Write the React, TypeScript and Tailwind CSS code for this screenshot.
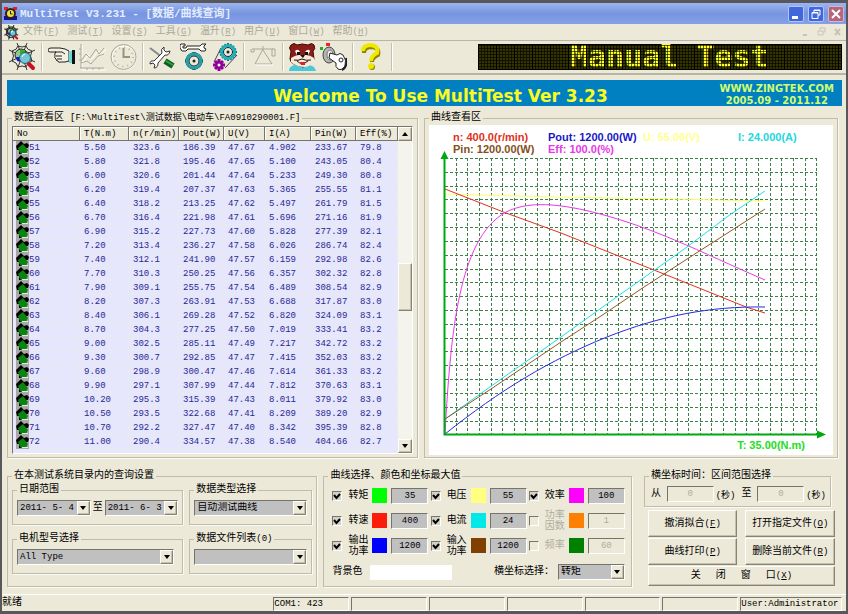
import type { ReactNode } from "react";
import clsx from "clsx";

const columns = [
  { name: "No", width: "w-[67px]" },
  { name: "T(N.m)", width: "w-[49px]" },
  { name: "n(r/min)", width: "w-[50px]" },
  { name: "Pout(W)", width: "w-[45px]" },
  { name: "U(V)", width: "w-[41px]" },
  { name: "I(A)", width: "w-[46px]" },
  { name: "Pin(W)", width: "w-[45px]" },
  { name: "Eff(%)", width: "w-[42px]" },
];

const rows = [
  ["51", "5.50", "323.6", "186.39", "47.67", "4.902", "233.67", "79.8"],
  ["52", "5.80", "321.8", "195.46", "47.65", "5.100", "243.05", "80.4"],
  ["53", "6.00", "320.6", "201.44", "47.64", "5.233", "249.30", "80.8"],
  ["54", "6.20", "319.4", "207.37", "47.63", "5.365", "255.55", "81.1"],
  ["55", "6.40", "318.2", "213.25", "47.62", "5.497", "261.79", "81.5"],
  ["56", "6.70", "316.4", "221.98", "47.61", "5.696", "271.16", "81.9"],
  ["57", "6.90", "315.2", "227.73", "47.60", "5.828", "277.39", "82.1"],
  ["58", "7.20", "313.4", "236.27", "47.58", "6.026", "286.74", "82.4"],
  ["59", "7.40", "312.1", "241.90", "47.57", "6.159", "292.98", "82.6"],
  ["60", "7.70", "310.3", "250.25", "47.56", "6.357", "302.32", "82.8"],
  ["61", "7.90", "309.1", "255.75", "47.54", "6.489", "308.54", "82.9"],
  ["62", "8.20", "307.3", "263.91", "47.53", "6.688", "317.87", "83.0"],
  ["63", "8.40", "306.1", "269.28", "47.52", "6.820", "324.09", "83.1"],
  ["64", "8.70", "304.3", "277.25", "47.50", "7.019", "333.41", "83.2"],
  ["65", "9.00", "302.5", "285.11", "47.49", "7.217", "342.72", "83.2"],
  ["66", "9.30", "300.7", "292.85", "47.47", "7.415", "352.03", "83.2"],
  ["67", "9.60", "298.9", "300.47", "47.46", "7.614", "361.33", "83.2"],
  ["68", "9.90", "297.1", "307.99", "47.44", "7.812", "370.63", "83.1"],
  ["69", "10.20", "295.3", "315.39", "47.43", "8.011", "379.92", "83.0"],
  ["70", "10.50", "293.5", "322.68", "47.41", "8.209", "389.20", "82.9"],
  ["71", "10.70", "292.2", "327.47", "47.40", "8.342", "395.39", "82.8"],
  ["72", "11.00", "290.4", "334.57", "47.38", "8.540", "404.66", "82.7"],
];

const menus = [
  ["文件", "F"],
  ["测试", "T"],
  ["设置", "S"],
  ["工具", "G"],
  ["温升", "R"],
  ["用户", "U"],
  ["窗口", "W"],
  ["帮助", "H"],
];

const curves = [
  { color: "#ffff60", d: "M445 194 558 197 674 199 765 201" },
  {
    color: "#e03020",
    d: "M445 189 506 213 561 233 611 253 664 274 704 290 746 307 765 313",
  },
  {
    color: "#e838e8",
    d: "M445 434C448 378 452 330 460 294 468 258 481 226 506 212 526 202 552 203 584 210 650 225 700 252 765 280",
  },
  {
    color: "#20e0e0",
    d: "M445 419 504 377 561 337 604 306 642 279 687 247 731 214 765 191",
  },
  {
    color: "#905828",
    d: "M445 419 491 389 561 342 604 314 641 289 664 274 701 250 765 209",
  },
  {
    color: "#2828e0",
    d: "M445 434C500 390 550 360 607 337 660 316 710 306 765 307",
  },
];

const curveOptions = [
  { name: "转矩", color: "bg-[#00ff00]", value: "35", on: true },
  { name: "电压", color: "bg-[#ffff80]", value: "55", on: true },
  { name: "效率", color: "bg-[#ff00ff]", value: "100", on: true },
  { name: "转速", color: "bg-[#fc1c0c]", value: "400", on: true },
  { name: "电流", color: "bg-[#00e8e8]", value: "24", on: true },
  { name: "功率因数", color: "bg-[#ff8000]", value: "1", on: false },
  { name: "输出功率", color: "bg-[#0000ff]", value: "1200", on: true },
  { name: "输入功率", color: "bg-[#804000]", value: "1200", on: true },
  { name: "频率", color: "bg-[#008000]", value: "60", on: false },
];

const sunken =
  "border border-t-[#77756a] border-l-[#77756a] border-r-white border-b-white";
const raised =
  "border border-t-white border-l-white border-r-[#858374] border-b-[#858374] shadow-[inset_-1px_-1px_0_#c4c1ae]";

const HotKey = ({ k }: { k: string }) => (
  <span className="text-[9px]">
    (<u>{k}</u>)
  </span>
);

const Group = ({
  title,
  className,
  children,
}: {
  title: ReactNode;
  className?: string;
  children: ReactNode;
}) => (
  <fieldset
    className={clsx(
      "min-w-0 border border-[#bfbcab] shadow-[1px_1px_0_#fbfaf3]",
      className,
    )}
  >
    <legend className="ml-1 whitespace-nowrap px-0.5 leading-3">{title}</legend>
    {children}
  </fieldset>
);

const DropDown = ({
  label,
  value,
  className,
  mono,
}: {
  label: string;
  value: string;
  className?: string;
  mono?: boolean;
}) => (
  <div className={clsx("relative h-4 bg-[#c0c0c0]", sunken, className)}>
    <select
      aria-label={label}
      className={clsx(
        "block h-full w-full appearance-none pl-0.5 leading-3 outline-none",
        mono && "text-[9px]",
      )}
    >
      <option>{value}</option>
    </select>
    <span
      className={clsx(
        "pointer-events-none absolute inset-y-0 right-0 flex w-[13px] items-center justify-center bg-[#ece9d8]",
        raised,
      )}
    >
      <svg width="6" height="4" viewBox="0 0 6 4">
        <path d="M0 0h6L3 4z" />
      </svg>
    </span>
  </div>
);

const Separator = () => (
  <span className="mx-[3px] h-7 w-0.5 border-l border-[#c4c1b0] bg-white" />
);

const ToolButton = ({ label, children }: { label: string; children: ReactNode }) => (
  <button type="button" aria-label={label} className="mx-0.5">
    <svg width="27" height="28" viewBox="0 0 27 28" fill="none">
      {children}
    </svg>
  </button>
);

const WebDrawing = () => (
  <>
    <path
      d="M13 13 8 0M13 13 18 0M13 13 26 7M13 13 26 19M13 13 18 27M13 13 8 27M13 13 0 19M13 13 0 7M9 3q4 2 8 0M17 3q1 4 6 5M23 8q-3 5 0 10M23 18q-5 1-6 6M9 24q4-2 8 0M9 24q-1-5-6-6M3 18q3-5 0-10M3 8q5-1 6-5M10 7q3 2 6 0 1 2 4 3-2 3 0 6"
      stroke="#333"
    />
    <circle cx="12" cy="12" r="6" fill="#90c890" stroke="#222" />
    <path d="M7 14h6v5l-5-1z" fill="#1818c8" />
    <path d="M11 7h5v4h-5z" fill="#38b020" />
    <circle cx="16" cy="15" r="5.500" fill="#70c8d8" stroke="#28606c" />
    <path d="M13 14q1-3 3-3" stroke="#fff" />
    <path d="m20 21 4 4" stroke="#c81028" strokeWidth="4" strokeLinecap="round" />
  </>
);

const gearTeeth = "M0-9V9M-9 0H9M-6-6 6 6M6-6-6 6M-3-8 3 8M3-8-3 8M-8-3 8 3M-8 3 8-3";

const ToolBar = () => (
  <div className="flex items-center">
    <span className="w-[5px]" />
    <ToolButton label="查询">
      <WebDrawing />
    </ToolButton>
    <Separator />
    <ToolButton label="手动测试">
      <path
        d="M0 7q0-2 3-2h9l5 1 4 2v10l-4 1h-4q-3 1-3-1-2 0-2-2-2-1-1-3-1-2 1-4H2Q0 9 0 7Z"
        fill="#f4f0e0"
        stroke="#222"
      />
      <path d="M7 9h7l3 2M8 13h6M9 16h5" stroke="#222" />
      <path d="M21 8h3v12h-3z" fill="#68d8d8" />
      <path d="M24 7h3v14h-3z" fill="#111" />
    </ToolButton>
    <ToolButton label="曲线">
      <g stroke="#fff" transform="translate(1 1)">
        <path d="M2 1v25h24M3 18l5-7 4 4 6-8 3 4 5-6" />
      </g>
      <path
        d="M2 1v24M1 25h24M2 18l5-7 4 4 6-9 3 5 5-6M2 20l6-2 4 3 7-8 6-2M0 6h2M0 11h2M0 17h2M8 25v2M14 25v2M20 25v2"
        stroke="#aaa899"
      />
    </ToolButton>
    <ToolButton label="时钟">
      <circle cx="14" cy="15" r="12" stroke="#fff" />
      <circle cx="13.500" cy="14" r="12.500" stroke="#a9a798" />
      <circle cx="13.500" cy="14" r="9.500" stroke="#b6b4a5" strokeDasharray="1 4" strokeWidth="2" />
      <path d="M13.500 5v9H20" stroke="#959384" strokeWidth="2" />
    </ToolButton>
    <Separator />
    <ToolButton label="工具">
      <path d="m1 5 8 6 3 3" stroke="#888" strokeWidth="2" />
      <path d="m16 18 8 5" stroke="#145c22" strokeWidth="6" />
      <path d="m17 18 7 4" stroke="#18b038" strokeWidth="2" />
      <path
        d="M15 4q-4 2-2 6L5 18q-4-1-4 3l3-1 2 2-1 3q4 0 4-5l7-8q4 1 5-4l-4 1-2-2z"
        fill="#fff"
        stroke="#333"
      />
    </ToolButton>
    <ToolButton label="设置">
      <g transform="translate(14 18)">
        <path d={gearTeeth} stroke="#104c50" strokeWidth="3" />
        <circle r="7" fill="#ece9d8" stroke="#20a0a8" strokeWidth="3" />
        <circle r="5" stroke="#123" />
        <circle r="1.500" fill="#222" />
      </g>
      <path
        d="M1 1h4v2H3v2h3l1-2h13l2-2h4l-2 2v2l2 1-1 2h-4l-2-2H8L6 8H2L0 5V2z"
        fill="#fff"
        stroke="#222"
      />
    </ToolButton>
    <ToolButton label="传动">
      <path d="M10 5 3 19M26 12 14 25" stroke="#444" />
      <g transform="translate(17 9)">
        <path d={gearTeeth} stroke="#107078" strokeWidth="2" />
        <circle r="6.500" fill="#ece9d8" stroke="#20b0b8" strokeWidth="3" />
        <circle r="4.500" stroke="#123" />
        <circle r="1.500" fill="#222" />
      </g>
      <g transform="translate(8 22)">
        <path d="M0-6V6M-6 0H6M-4-4 4 4M4-4-4 4" stroke="#900098" strokeWidth="3" />
        <circle r="1.500" fill="#fff" />
      </g>
    </ToolButton>
    <Separator />
    <ToolButton label="校准">
      <path d="M2 6h21M13 6 5 21h17L13 7M1 6v3h3V6M22 6v7h3V6ZM13 3v3" stroke="#aaa899" />
      <path d="M5 22h18" stroke="#fff" />
    </ToolButton>
    <Separator />
    <ToolButton label="用户">
      <path d="M0 28q0-5 6-6h14q6 1 7 6z" fill="#48c8d8" />
      <path
        d="M2 2q3-3 6 0 5-2 11 0 4-3 6 0 2 4-1 6l1 8q-1 4-6 6l-5 2-6-2q-6-1-7-6l1-8Q-1 5 2 2Z"
        fill="#8c1c18"
        stroke="#310"
      />
      <path d="M2 15q5-3 8-3h7q4 0 8 3v4q-5 5-9 5-9 0-14-5z" fill="#f8e8d8" />
      <path d="M6 8q3-3 5 1l-1 3H8zM16 9q3-4 5-1l-2 4h-2z" fill="#fff" />
      <path d="M8 9h3v3H8zM16 9h3v3h-3zM11 12h5l-2 3z" fill="#111" />
      <path d="M5 17q4 1 8-1 4 2 9 1M8 18q5 5 11 0" stroke="#211" />
      <path d="M11 19h5v3h-4z" fill="#d02828" />
    </ToolButton>
    <ToolButton label="密钥">
      <path d="M6 0h4v3H6z" fill="#e82818" />
      <path d="M0 4h3v3H0z" fill="#20b020" />
      <ellipse cx="9" cy="12" rx="6" ry="8" fill="#b4b4b0" stroke="#444" />
      <ellipse cx="10" cy="12" rx="3" ry="5" fill="#eee" stroke="#777" />
      <path
        d="m10 10 7 2q3-3 6 0 4 5 2 11-3 5-7 3-3-2-2-6l-7-5z"
        fill="#fff"
        stroke="#222"
      />
      <path d="M26 15q2 9-4 12" stroke="#222" strokeWidth="2" />
      <circle cx="21" cy="17" r="2" stroke="#222" />
    </ToolButton>
    <Separator />
    <ToolButton label="帮助">
      <path
        d="M4 9q0-6 8-6 8 1 6 8-6 3-6 7"
        stroke="#8c8600"
        strokeWidth="4"
        transform="translate(1 1)"
      />
      <path d="M4 8q0-6 8-6 8 1 6 8-6 3-6 8" stroke="#f0e800" strokeWidth="4" />
      <circle cx="13" cy="24" r="3" fill="#8c8600" />
      <circle cx="12" cy="23" r="3" fill="#f0e800" />
    </ToolButton>
    <Separator />
  </div>
);

const LedPanel = () => (
  <div className="relative flex h-[26px] w-[364px] items-center border border-black bg-[#343400] pl-[91px]">
    <p className="whitespace-pre font-['DejaVu_Sans_Mono',monospace] text-[30px] leading-[26px] font-bold text-[#ffff20]">
      Manual Test
    </p>
    {/* dark mesh between the lamps, stronger after every fifth one */}
    <div className="absolute inset-0 bg-[repeating-linear-gradient(90deg,transparent_0_17px,#000_17px_18px),repeating-linear-gradient(90deg,transparent_0_2px,#00000099_2px_3px),repeating-linear-gradient(0deg,transparent_0_2px,#00000099_2px_3px)]" />
  </div>
);

const TitleBar = () => (
  <header className="flex h-[21px] items-center bg-linear-to-b from-[#9db4ee] via-[#7795e0] to-[#84a0e8] pr-0.5">
    <svg width="15" height="15" viewBox="0 0 15 15" className="ml-px">
      <path d="M1 1h4v3H1zM10 1h4v3h-4z" fill="#e02020" />
      <path d="M1 10h13v4H1z" fill="#1010a0" />
      <circle cx="7.500" cy="7.500" r="5.500" fill="#302020" />
      <circle cx="7.500" cy="7.500" r="3.500" fill="#f0e040" />
      <path d="M7.500 5v3h2" stroke="#222" fill="none" />
    </svg>
    <h1 className="ml-0.5 flex-1 whitespace-nowrap text-[11px] font-bold text-[#e4ecff]">
      MultiTest V3.231 - [数据/曲线查询]
    </h1>
    <div className="flex gap-1">
      <button
        type="button"
        aria-label="最小化"
        className="h-4 w-4 rounded-xs border border-[#b4c6f4] bg-[#4068dc]"
      >
        <svg viewBox="0 0 14 14">
          <path d="M3 9h6v3H3z" fill="#fff" />
        </svg>
      </button>
      <button
        type="button"
        aria-label="还原"
        className="h-4 w-4 rounded-xs border border-[#b4c6f4] bg-[#4068dc]"
      >
        <svg viewBox="0 0 14 14" fill="none" stroke="#fff">
          <path d="M5 5V3h6v5H9M3 5.500h6v6H3zM3 6h6M5 3.500h6" />
        </svg>
      </button>
      <button
        type="button"
        aria-label="关闭"
        className="h-4 w-4 rounded-xs border border-[#d0b8d0] bg-[#b4667c]"
      >
        <svg viewBox="0 0 14 14" stroke="#fff" strokeWidth="2">
          <path d="m3 3 8 8M11 3l-8 8" />
        </svg>
      </button>
    </div>
  </header>
);

const MenuBar = () => (
  <nav className="flex h-[17px] items-center border-b border-[#b8b5a4] pr-1 text-[#aaa899]">
    <svg width="15" height="15" viewBox="0 0 27 28" fill="none" strokeWidth="2" className="ml-0.5">
      <WebDrawing />
    </svg>
    <div className="ml-1 flex flex-1 gap-2">
      {menus.map(([name, k]) => (
        <button key={k} type="button" className="whitespace-nowrap">
          {name}
          <HotKey k={k} />
        </button>
      ))}
    </div>
    <svg width="42" height="10" viewBox="0 0 42 10" fill="none" stroke="#c8c5b6">
      <path d="M3 8h4" strokeWidth="2" />
      <path d="M20 3V1h5v4h-2M18 4h5v4h-5z" />
      <path d="m35 2 5 6M40 2l-5 6" strokeWidth="2" />
    </svg>
  </nav>
);

const DataTable = () => (
  <div className={clsx("mx-1 mt-0.5 mb-[3px] flex bg-[#e6e6fc]", sunken)}>
    <div className="min-w-0 flex-1 pb-1">
      <table className="w-full table-fixed border-collapse text-[9px] leading-[14px]">
        <thead>
          <tr>
            {columns.map((c) => (
              <th
                key={c.name}
                className={clsx(
                  "h-[14px] whitespace-nowrap bg-[#ece9d8] p-0 pl-1 text-left font-normal shadow-[inset_-1px_-1px_0_#77756a,inset_1px_1px_0_#fff]",
                  c.width,
                )}
              >
                {c.name}
              </th>
            ))}
          </tr>
        </thead>
        <tbody className="text-[#282890]">
          {rows.map((row) => (
            <tr key={row[0]}>
              {row.map((cell, i) => (
                <td
                  key={columns[i].name}
                  className="h-[14px] p-0 pl-1 shadow-[inset_-1px_-1px_0_#e9e9f2]"
                >
                  {i === 0 ? (
                    <span className="flex">
                      <svg
                        width="13"
                        height="14"
                        viewBox="0 0 13 14"
                        className="-ml-px shrink-0"
                      >
                        <path d="M0 0h13v14H0z" fill="#a8a8a8" />
                        <path d="M0 5 5 0l3 3 3-1 2 2-1 3H9v6H3V9H1z" />
                        <path d="m2 7 5-4 5 6-2 4H5L3 10z" fill="#088410" />
                        <path d="M6 12h6v1H6z" fill="#dff0df" />
                      </svg>
                      {cell}
                    </span>
                  ) : (
                    cell
                  )}
                </td>
              ))}
            </tr>
          ))}
        </tbody>
      </table>
    </div>
    <div className="flex w-3.5 flex-col bg-[#f5f4ec]">
      <button
        type="button"
        aria-label="向上"
        className={clsx("flex h-3.5 items-center justify-center bg-[#ece9d8]", raised)}
      >
        <svg width="6" height="4" viewBox="0 0 6 4">
          <path d="M0 4h6L3 0z" />
        </svg>
      </button>
      <div className="grow-[122]" />
      <div className={clsx("h-12 bg-[#ece9d8]", raised)} />
      <div className="grow-[129]" />
      <button
        type="button"
        aria-label="向下"
        className={clsx("flex h-3.5 items-center justify-center bg-[#ece9d8]", raised)}
      >
        <svg width="6" height="4" viewBox="0 0 6 4">
          <path d="M0 0h6L3 4z" />
        </svg>
      </button>
    </div>
  </div>
);

const Chart = () => (
  <div className="mx-1 mt-px mb-0.5 bg-white pt-1.5 font-['Liberation_Sans',Arial,sans-serif] text-[11px] leading-3 font-bold">
    <div className="grid grid-cols-4 pl-6 whitespace-nowrap">
      <span className="text-[#e03020]">n: 400.0(r/min)</span>
      <span className="text-[#1818c8]">Pout: 1200.00(W)</span>
      <span className="text-[#ffff90]">U: 55.00(V)</span>
      <span className="text-[#20d8e0]">I: 24.000(A)</span>
      <span className="text-[#845020]">Pin: 1200.00(W)</span>
      <span className="text-[#e838e8]">Eff: 100.0(%)</span>
    </div>
    <svg viewBox="429 151 404 288" fill="none" className="-mt-1 block h-auto w-full">
      <g stroke="#3c8048" strokeDasharray="3 2" shapeRendering="crispEdges">
        {Array.from({ length: 32 }, (_, i) => {
          const x = Math.round(444 + (i + 1) * 11.63) + 0.5;
          return <path key={x} d={`M${x} 158V434`} />;
        })}
        {Array.from({ length: 20 }, (_, i) => {
          const y = Math.round(158 + i * 13.82) + 0.5;
          return <path key={y} d={`M445 ${y}H817`} />;
        })}
      </g>
      {curves.map((c) => (
        <path key={c.color} d={c.d} stroke={c.color} />
      ))}
      <path d="M444.500 154V434.500H820" stroke="#00a810" strokeWidth="2" />
      <path d="m444.500 151 4 8h-8zM826 434.500l-9-4v8z" fill="#00a810" />
    </svg>
    <p className="pr-7 pb-1 text-right text-[#20e020]">T: 35.00(N.m)</p>
  </div>
);

const QuerySettings = () => (
  <Group title="在本测试系统目录内的查询设置" className="flex-[310] pb-2.5">
    <div className="mx-1 mt-0.5 grid grid-cols-[171fr_123fr] gap-x-1.5 gap-y-2">
      <Group title="日期范围" className="pb-2">
        <div className="mt-1 flex items-center gap-0.5 px-1">
          <DropDown label="开始日期" value="2011- 5- 4" className="flex-1" mono />
          至
          <DropDown label="结束日期" value="2011- 6- 3" className="flex-1" mono />
        </div>
      </Group>
      <Group title="数据类型选择">
        <DropDown label="数据类型选择" value="自动测试曲线" className="mx-1 mt-1" />
      </Group>
      <Group title="电机型号选择" className="pb-2">
        <DropDown label="电机型号选择" value="All Type" className="mt-1 mr-2 ml-1" mono />
      </Group>
      <Group
        title={
          <>
            数据文件列表<span className="text-[9px]">(0)</span>
          </>
        }
      >
        <DropDown label="数据文件列表" value="" className="mx-1 mt-1" />
      </Group>
    </div>
  </Group>
);

const CurveSettings = () => (
  <Group title="曲线选择、颜色和坐标最大值" className="flex-[308] pb-1.5">
    <div className="mt-px grid grid-cols-3 pr-1 pl-2">
      {curveOptions.map((o) => (
        <div key={o.name} className="flex h-[25px] items-center gap-1 pr-1">
          <label
            className={clsx(
              "flex flex-1 items-center gap-1.5 leading-[11px]",
              !o.on && "text-[#b0ae9f]",
            )}
          >
            <span className="relative flex h-2.5 w-2.5 shrink-0">
              <input
                type="checkbox"
                defaultChecked={o.on}
                disabled={!o.on}
                className={clsx(
                  "peer h-2.5 w-2.5 appearance-none",
                  sunken,
                  o.on ? "bg-[#d4d2c8]" : "bg-[#ece9d8]",
                )}
              />
              <svg
                viewBox="0 0 10 10"
                className="pointer-events-none absolute inset-0 hidden peer-checked:block"
              >
                <path d="m2 4 2.500 3L8 3" fill="none" stroke="#000" strokeWidth="2" />
              </svg>
            </span>
            <span className="w-5">{o.name}</span>
          </label>
          <button
            type="button"
            aria-label={`${o.name}颜色`}
            className={clsx("h-[15px] w-[15px] shrink-0", o.color)}
          />
          <input
            aria-label={`${o.name}最大值`}
            defaultValue={o.value}
            disabled={!o.on}
            className={clsx(
              "h-4 w-[37px] text-center text-[9px]",
              sunken,
              o.on ? "bg-[#c0c0c0]" : "bg-[#ece9d8] text-[#b0ae9f]",
            )}
          />
        </div>
      ))}
    </div>
    <div className="mt-1.5 flex items-center pr-1.5 pl-2">
      背景色
      <button type="button" aria-label="背景色" className="ml-2 h-[15px] w-[82px] bg-white" />
      <span className="mr-1 ml-auto">横坐标选择：</span>
      <DropDown label="横坐标选择" value="转矩" className="w-[67px]" />
    </div>
  </Group>
);

const RangeInput = ({ label }: { label: string }) => (
  <>
    {label}
    <input
      aria-label={label}
      defaultValue="0"
      disabled
      className={clsx(
        "mr-0.5 ml-1.5 h-4 w-0 flex-1 bg-[#ece9d8] text-center text-[9px] text-[#b0ae9f]",
        sunken,
      )}
    />
    <span className="self-end text-[9px] leading-3">(秒)</span>
  </>
);

const Actions = () => (
  <div className="flex-[192] pr-[3px]">
    <Group title="横坐标时间：区间范围选择" className="mr-1 pb-1">
      <div className="mt-1 flex items-center pr-1 pl-1.5">
        <RangeInput label="从" />
        <span className="w-1.5" />
        <RangeInput label="至" />
      </div>
    </Group>
    <div className="mt-[3px] ml-1 grid grid-cols-2 gap-x-2 gap-y-px">
      <button type="button" className={clsx("h-[27px] whitespace-nowrap", raised)}>
        撤消拟合
        <HotKey k="F" />
      </button>
      <button type="button" className={clsx("h-[27px] whitespace-nowrap", raised)}>
        打开指定文件
        <HotKey k="O" />
      </button>
      <button type="button" className={clsx("h-[27px] whitespace-nowrap", raised)}>
        曲线打印
        <HotKey k="P" />
      </button>
      <button type="button" className={clsx("h-[27px] whitespace-nowrap", raised)}>
        删除当前文件
        <HotKey k="R" />
      </button>
      <button
        type="button"
        className={clsx("col-span-2 flex h-5 items-center justify-center gap-[15px]", raised)}
      >
        <span>关</span>
        <span>闭</span>
        <span>窗</span>
        <span>
          口
          <HotKey k="X" />
        </span>
      </button>
    </div>
  </div>
);

const StatusBar = () => (
  <footer className="mt-auto border-t border-white pt-0.5 text-[9px]">
    <div className="grid h-[14px] grid-cols-[270fr_repeat(6,76fr)_102fr] gap-x-0.5 pr-1 leading-3">
      <span className="text-[10px]">就绪</span>
      <span className={sunken}>COM1: 423</span>
      <span className={sunken} />
      <span className={sunken} />
      <span className={sunken} />
      <span className={sunken} />
      <span className={sunken} />
      <span className={clsx("whitespace-nowrap", sunken)}>User:Administrator</span>
    </div>
  </footer>
);

export default function App() {
  return (
    <div className="flex min-h-screen flex-col border-x-2 border-y-[3px] border-[#58585c] bg-[#ece9d8] font-['Liberation_Mono','Noto_Sans_CJK_SC',monospace] text-[10px] leading-3 text-black">
      <TitleBar />
      <MenuBar />
      <div className="flex h-[34px] items-center justify-between border-b-2 border-[#b8b5a4] pr-1">
        <ToolBar />
        <LedPanel />
      </div>

      <main className="pr-1 pl-[5px]">
        <div className="mt-[5px] flex h-[26px] items-center bg-[#0080c0] pr-2 pl-10 font-['DejaVu_Sans',Verdana,sans-serif] whitespace-nowrap">
          <div className="flex-1" />
          <h2 className="pt-1.5 text-[17px] leading-5 font-bold text-[#f8fc20]">
            Welcome To Use MultiTest Ver 3.23
          </h2>
          <div className="flex flex-1 justify-end">
            <p className="pt-1 text-center text-[10px] leading-3 font-bold text-[#d0fc70]">
              WWW.ZINGTEK.COM
              <br />
              2005.09 - 2011.12
            </p>
          </div>
        </div>

        <div className="mt-1.5 mr-1 grid grid-cols-[411fr_414fr] gap-x-1.5">
          <Group
            title={
              <>
                数据查看区{" "}
                <span className="text-[9px]">
                  [F:\MultiTest\测试数据\电动车\FA0910290001.F]
                </span>
              </>
            }
          >
            <DataTable />
          </Group>
          <Group title="曲线查看区">
            <Chart />
          </Group>
        </div>

        <div className="mt-3 flex pr-1">
          <QuerySettings />
          <span className="w-1.5" />
          <CurveSettings />
          <span className="w-3" />
          <Actions />
        </div>
      </main>

      <StatusBar />
    </div>
  );
}
